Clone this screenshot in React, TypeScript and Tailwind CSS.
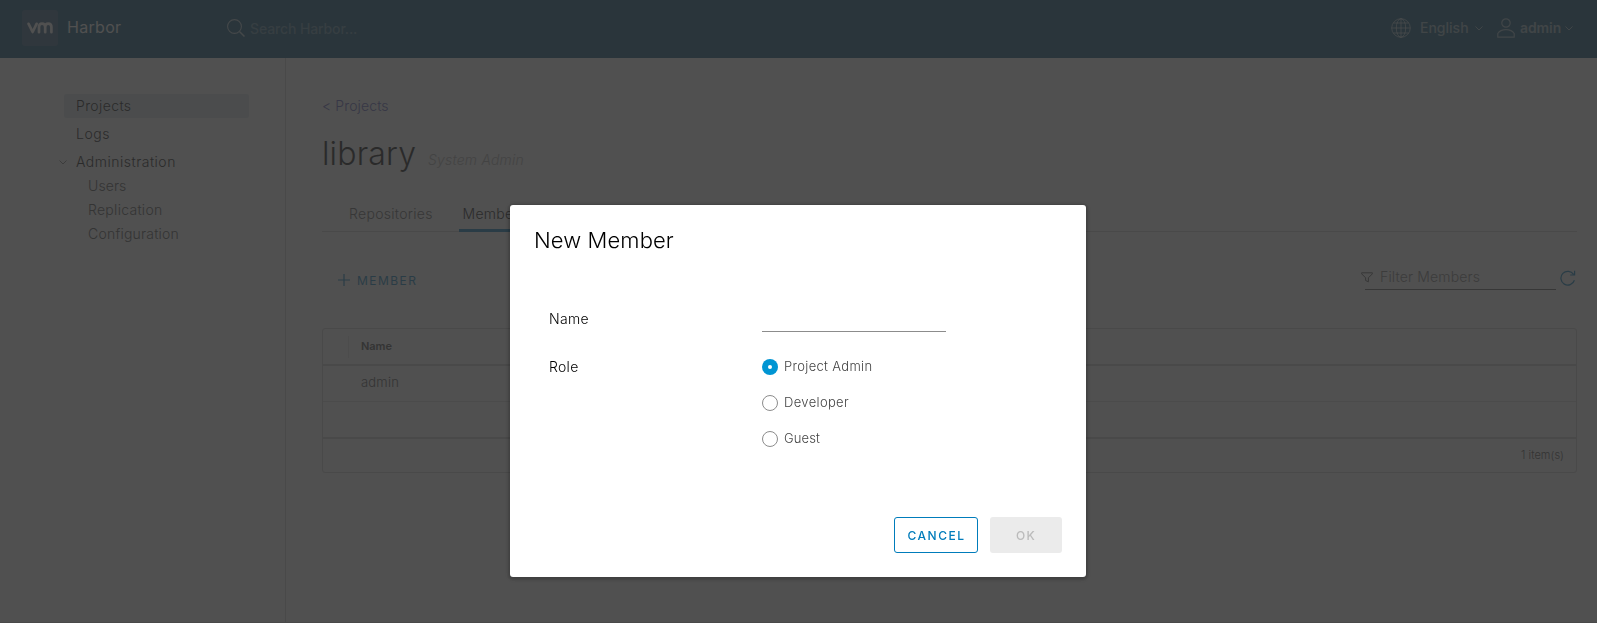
import type { ReactNode } from "react";

const font = "font-[Inter,sans-serif]";

function Chevron({ className }: { className: string }) {
  return (
    <svg viewBox="0 0 8 5" className={className} fill="none" stroke="currentColor">
      <path d="M0.5 0.5 4 4 7.5 0.5" />
    </svg>
  );
}

function Header() {
  return (
    <header className="flex h-[58px] items-start bg-[#004a70] text-[#fafafa]">
      <div className="mt-[10px] ml-[22px] flex h-9 w-9 items-center justify-center rounded-[3px] bg-[#2b5a80]">
        <svg viewBox="0 0 26 12" className="h-3 w-[26px]" fill="none" stroke="currentColor" strokeWidth="2.7" strokeLinecap="round" strokeLinejoin="round">
          <path d="M1.6 1.8 5.6 10 9.6 1.8 M12 10.2V5C12 2.6 13 1.6 15 1.6S18.2 2.8 18.2 5V10.2 M18.2 5C18.2 2.8 19.2 1.6 21.2 1.6S24.4 2.8 24.4 5V10.2" />
        </svg>
      </div>
      <div className="ml-[9px] w-[160px] text-base leading-[54px] tracking-[0.3px]">Harbor</div>
      <svg viewBox="0 0 18 18" className="mt-[19px] h-[18px] w-[18px]" fill="none" stroke="currentColor" opacity="0.7">
        <circle cx="7.5" cy="7.5" r="6.9" strokeWidth="1.1" />
        <path d="M12.7 12.7 17.5 17.5" strokeWidth="1.5" />
      </svg>
      <div className="ml-[5px] text-sm leading-[58px] font-medium tracking-[-0.12px] text-[#fafafa]/35">Search Harbor...</div>
      <div className="ml-auto flex items-start text-[#fafafa]/60">
        <svg viewBox="0 0 20 20" className="mt-[18px] h-5 w-5" fill="none" stroke="currentColor">
          <circle cx="10" cy="10" r="9.3" />
          <ellipse cx="10" cy="10" rx="4.7" ry="9.3" />
          <path d="M10 .7V19.3M.7 10H19.3M2.5 5H17.5M2.5 15H17.5" />
        </svg>
        <span className="ml-[9px] w-[55px] text-sm leading-[56px] font-[450] tracking-[0px]">English</span>
        <Chevron className="mt-[26px] h-[5px] w-2" />
        <svg viewBox="0 0 18 20" className="mt-[18px] ml-[14px] h-5 w-[18px]" fill="none" stroke="currentColor" strokeWidth="1.2">
          <circle cx="9" cy="5" r="4.2" />
          <path d="M.8 19.2V15.5C2.5 12.8 5.5 11.6 9 11.6S15.5 12.8 17.2 15.5V19.2Z" />
        </svg>
        <span className="ml-[5px] w-[45px] text-sm leading-[56px] font-semibold tracking-[-0.1px]">admin</span>
        <Chevron className="mt-[26px] mr-[24px] h-[5px] w-2" />
      </div>
    </header>
  );
}

function Sidebar() {
  return (
    <nav className="w-[286px] shrink-0 border-r border-[#ccc] pt-9 text-sm leading-6 font-[350] text-black">
      <div className="ml-16 w-[185px] rounded-[3px] bg-[#d9e4ea] pl-3 tracking-[0.38px]">Projects</div>
      <div className="mt-1 pl-[76px] tracking-[0.5px]">Logs</div>
      <div className="mt-1 flex items-center pl-[59px] tracking-[0.5px]">
        <Chevron className="mr-[9px] h-[5px] w-2 text-[#777]" />
        Administration
      </div>
      <div className="pl-[88px] font-light text-[#454545]">
        <div className="tracking-[0.08px]">Users</div>
        <div className="tracking-[0.28px]">Replication</div>
        <div className="tracking-[0.22px]">Configuration</div>
      </div>
    </nav>
  );
}

function Members() {
  return (
    <main className="grow pt-9 pr-5 pl-9 text-sm leading-6 font-light">
      <div className="tracking-[0.12px] text-[#5659b8]">&lt; Projects</div>
      <div className="mt-4 flex items-baseline">
        <h1 className="w-[106px] text-[32px] leading-10 tracking-[0.15px] text-black">library</h1>
        <span className="tracking-[0.2px] text-[#aaa] italic">System Admin</span>
      </div>
      <div className="mt-7 flex h-[30px] border-b border-[#ccc] pl-[27px]">
        <div className="w-[110px] tracking-[0.3px] text-[#565656]">Repositories</div>
        <div className="h-[30px] border-b-3 border-[#007cbb] px-[3.5px] tracking-[0.3px] text-black">Members</div>
      </div>
      <div className="mt-[33px] flex h-6">
        <div className="mt-[7px] flex items-center pl-4 text-[#007cbb]">
          <svg viewBox="0 0 12 12" className="mr-[7px] -mt-[2px] h-3 w-3" stroke="currentColor" strokeWidth="1.2">
            <path d="M6 0V12M0 6H12" />
          </svg>
          <span className="pt-px text-xs leading-6 font-normal tracking-[1.45px]">MEMBER</span>
        </div>
        <div className="ml-auto flex">
          <svg viewBox="0 0 12 11" className="mt-[7px] -ml-px mr-px h-[11px] w-3 text-[#565656]" fill="none" stroke="currentColor">
            <path d="M.6 .8H11.4V1.8L7.4 5.8V9.8L4.6 8.5V5.8L.6 1.8Z" />
          </svg>
          <div className="-ml-[9px] h-[25px] w-[191px] border-b border-[#565656] pl-[15px] tracking-[0.16px] text-[#777]">Filter Members</div>
          <svg viewBox="0 0 16 16" className="mt-[5px] mr-px ml-[4px] h-4 w-4 text-[#007cbb]" fill="none" stroke="currentColor" strokeWidth="1.2">
            <path d="M14.4 10.3A6.9 6.9 0 1 1 13.6 4.4M14.6 .8V5H10.2" />
          </svg>
        </div>
      </div>
      <div className="mt-[39px] h-[145px] rounded-[3px] border border-[#ccc] text-[#454545]">
        <div className="flex h-[37px] items-center border-b-2 border-[#ccc] text-[11px] font-semibold tracking-[-0.05px]">
          <div className="mr-[12px] ml-[25px] h-[22px] w-px bg-[#e4e4e4]" />
          <span className="pb-[2px]">Name</span>
        </div>
        <div className="h-9 border-b border-[#ddd] pl-[38px] text-[13px] leading-[33px] tracking-[0.2px]">admin</div>
        <div className="h-[37px] border-b-2 border-[#ccc]" />
        <div className="pr-[12px] text-right text-[11px] leading-[33px] tracking-[0.05px]">1 item(s)</div>
      </div>
    </main>
  );
}

function Radio({ checked, children }: { checked?: boolean; children: ReactNode }) {
  return (
    <label className="mb-3 flex h-6 items-center text-[13px] font-light text-[#454545]">
      {checked ? (
        <span className="mr-[6px] flex h-4 w-4 items-center justify-center rounded-full bg-[#0095d3]">
          <span className="h-1 w-1 rounded-full bg-white" />
        </span>
      ) : (
        <span className="mr-[6px] h-4 w-4 rounded-full border border-[#8c8c8c]" />
      )}
      <span className="pb-[2px]">{children}</span>
    </label>
  );
}

function NewMember() {
  return (
    <div className="fixed inset-0 flex items-start bg-[#313131]/85 pt-[205px] pl-[510px]">
      <section className="flex h-[372px] w-[576px] flex-col rounded-[3px] bg-white px-6 pt-[23px] pb-6 text-black shadow-[0_1px_3px_2px_rgba(0,0,0,0.2)]">
        <h2 className="text-[22px] leading-6 font-light tracking-[0.1px]">New Member</h2>
        <div className="mt-[55px] flex pl-[15px] text-sm leading-6 font-[350]">
          <div className="w-[213px] tracking-[0.35px]">Name</div>
          <div className="h-[25px] w-[184px] border-b border-[#8c8c8c]" />
        </div>
        <div className="mt-[23px] flex pl-[15px] text-sm leading-6 font-[350]">
          <div className="w-[213px] tracking-[0.3px]">Role</div>
          <div>
            <Radio checked><span className="tracking-[0.32px]">Project Admin</span></Radio>
            <Radio><span className="tracking-[0.34px]">Developer</span></Radio>
            <Radio><span className="tracking-[0.11px]">Guest</span></Radio>
          </div>
        </div>
        <div className="mt-auto flex justify-end gap-3 text-xs font-[450]">
          <button className="h-9 w-[84px] rounded-[3px] border border-[#007cbb] pt-[2px] pl-px tracking-[1.5px] text-[#007cbb]">CANCEL</button>
          <button className="h-9 w-[72px] rounded-[3px] bg-[#ebebeb] pt-[2px] tracking-[1.3px] text-[#bbb]" disabled>OK</button>
        </div>
      </section>
    </div>
  );
}

export default function App() {
  return (
    <div className={`${font} flex h-[623px] flex-col overflow-hidden border-b border-[#ccc] bg-[#fafafa]`}>
      <Header />
      <div className="flex grow">
        <Sidebar />
        <Members />
      </div>
      <NewMember />
    </div>
  );
}
